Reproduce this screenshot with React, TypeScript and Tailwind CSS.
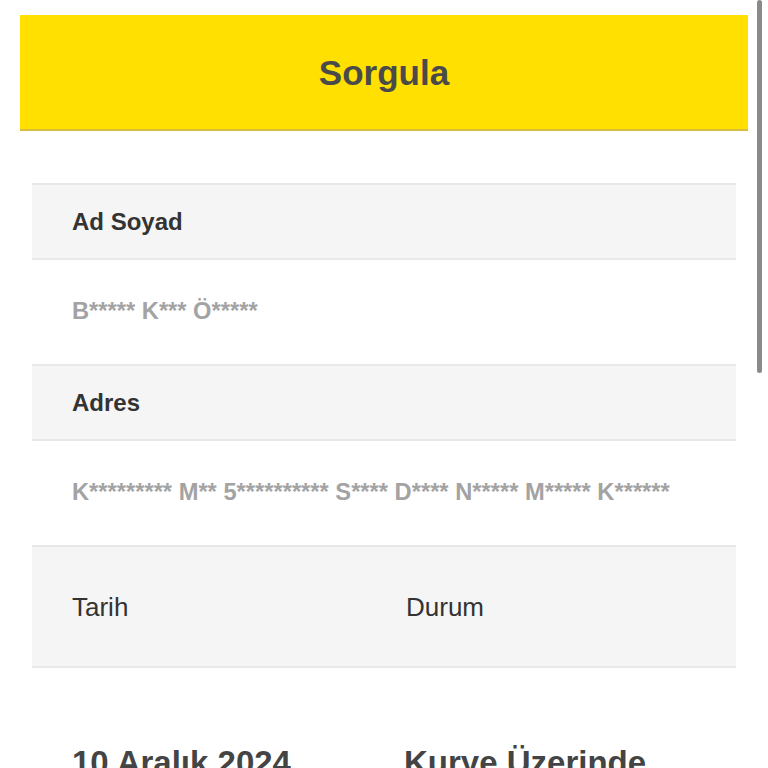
import React from "react"

type Row = {
  label: string
  value: string
}

const rows: Row[] = [
  { label: "Ad Soyad", value: "B***** K*** Ö*****" },
  { label: "Adres", value: "K********* M** 5********** S**** D**** N***** M***** K******" },
]

export default function App() {
  return (
    <div className="relative min-h-screen bg-white px-5 pt-[15px] font-['Liberation_Sans',Arial,sans-serif]">
      {/* scroll indicator */}
      <div className="absolute right-[6px] top-0 h-[373px] w-[5px] rounded-full bg-[#8a8a8a]" />

      <div className="flex h-[116px] items-center justify-center border-b-2 border-[#d8bc3c] bg-[#ffe000]">
        <h1 className="text-[35px] font-bold leading-none text-[#4a4a4a]">Sorgula</h1>
      </div>

      <div className="mx-3 mt-[52px]">
        {rows.map((row) => (
          <div key={row.label}>
            <div className="flex h-[75px] items-center border-t-2 border-[#e8e8e8] bg-[#f5f5f5] pl-10">
              <span className="text-[24px] font-bold leading-none text-[#333333]">{row.label}</span>
            </div>
            <div className="flex h-[106px] items-center border-t-2 border-[#e8e8e8] bg-white pl-10">
              <span className="text-[23.7px] font-bold leading-none text-[#a3a3a3]">{row.value}</span>
            </div>
          </div>
        ))}

        <div className="grid h-[121px] grid-cols-[334px_1fr] items-center border-t-2 border-[#e8e8e8] bg-[#f5f5f5]">
          <span className="pl-10 text-[26px] leading-none text-[#333333]">Tarih</span>
          <span className="pl-10 text-[26px] leading-none text-[#333333]">Durum</span>
        </div>

        <div className="grid grid-cols-[332px_1fr] border-t-2 border-[#e8e8e8] bg-white pb-16 pt-[78px]">
          <span className="pl-10 text-[33px] font-bold leading-none text-[#444444]">10 Aralık 2024</span>
          <span className="pl-10 text-[33px] font-bold leading-none text-[#444444]">Kurye Üzerinde</span>
        </div>
      </div>
    </div>
  )
}
